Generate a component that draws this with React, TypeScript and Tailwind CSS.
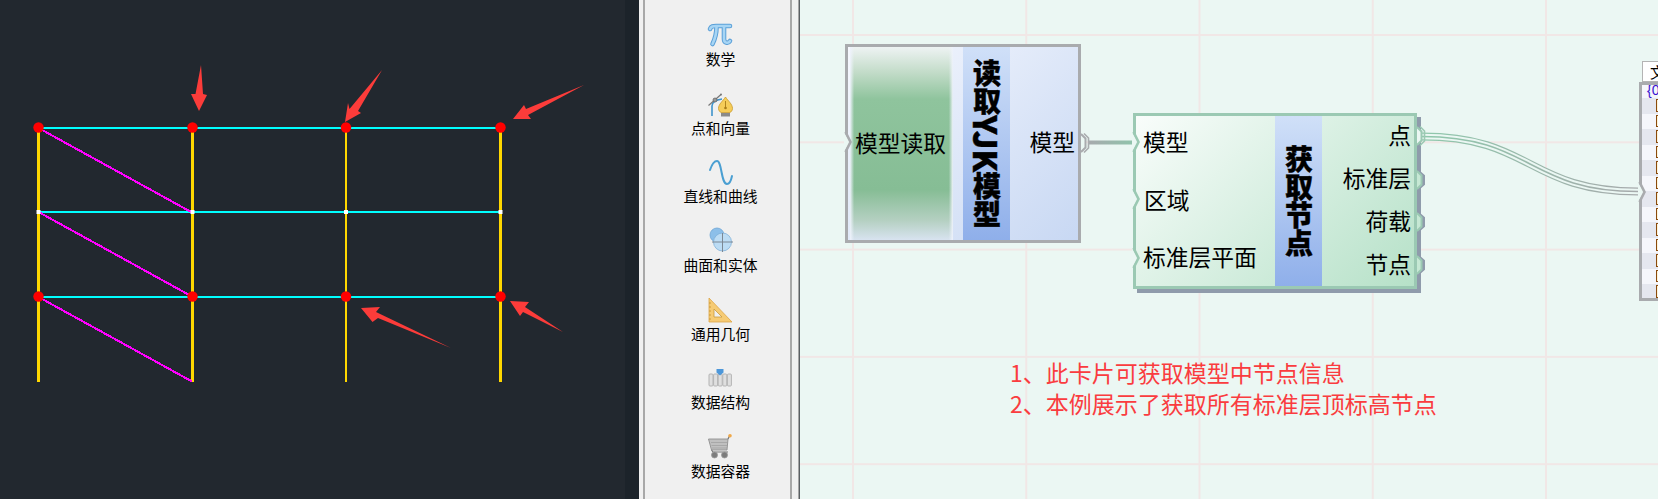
import React from "react";

const CJK = "font-['Noto_Sans_CJK_SC','Noto_Sans',sans-serif]";

function Diagram() {
  const xs = [38.5, 192.5, 346, 500.5];
  const widths = [3, 3, 2, 3];
  const ys = [128, 212, 297];
  const arrows = [
    "201,65 195.5,94 191,94 199,111 207,95 203,94",
    "345,122 348,103 349.5,109 382,70 358,111 361,113",
    "513,119 524,105 526,109 584,85 528,115 531,119",
    "361,308 380,307 376,312 451,348 378,318 372.5,322",
    "510,301 529,302 525,307 563,332 523,312 520,316",
  ];
  return (
    <svg width="639" height="499" viewBox="0 0 639 499" className="block">
      {xs.map((x, i) => (
        <line key={x} x1={x} x2={x} y1={128} y2={382} stroke="#ffd700" strokeWidth={widths[i]} />
      ))}
      {ys.map((y) => (
        <line key={y} x1={38.5} x2={500.5} y1={y} y2={y} stroke="#00ffff" strokeWidth="2" />
      ))}
      {[128, 212, 297].map((y) => (
        <line key={y} x1={38.5} y1={y} x2={192} y2={y + 84.5} stroke="#ff00ff" strokeWidth="2.1" shapeRendering="crispEdges" />
      ))}
      {xs.map((x) => (
        <rect key={x} x={x - 2} y={210} width="4" height="4" fill="#ffffff" />
      ))}
      {xs.flatMap((x) =>
        [128, 297].map((y) => <ellipse key={`${x}-${y}`} cx={x} cy={y - 0.5} rx="5.2" ry="5.2" fill="#ff0000" />)
      )}
      {arrows.map((p) => (
        <polygon key={p} points={p} fill="#fc3c3a" />
      ))}
    </svg>
  );
}

const PiIcon = () => (
  <svg width="24" height="24" viewBox="0 0 24 24" className="overflow-visible" fill="none">
    <g stroke="#5ba0d8" strokeWidth="4.6" strokeLinecap="round">
      <path d="M2 7 C3 4 5 4 8 4 L22 4" />
      <path d="M8.5 5 C8.5 12 7 17 4.5 22" />
      <path d="M16 5 L16 17 C16 21 20 22 22 19" />
    </g>
    <g stroke="#a7d5f4" strokeWidth="2.6" strokeLinecap="round">
      <path d="M2 7 C3 4 5 4 8 4 L22 4" />
      <path d="M8.5 5 C8.5 12 7 17 4.5 22" />
      <path d="M16 5 L16 17 C16 21 20 22 22 19" />
    </g>
  </svg>
);

const PointIcon = () => (
  <svg width="24" height="24" viewBox="0 0 24 24" className="overflow-visible" fill="none">
    <path d="M4 25 L4 15 C4 11 7 9 14 8" stroke="#3f94cc" strokeWidth="1.6" />
    <path d="M0.5 14.5 L13 3.5" stroke="#777" strokeWidth="1.2" />
    <circle cx="7" cy="9" r="2" fill="#9a9a9a" stroke="#666" strokeWidth="0.8" />
    <circle cx="13" cy="3.5" r="1" fill="#777" />
    <path d="M17.5 6 C20 10 24.5 13 24.5 17.5 C24.5 19.5 23 21 22 21.5 L13 21.5 C12 21 10.5 19.5 10.5 17.5 C10.5 13 15 10 17.5 6 Z" fill="#f5cc58" stroke="#c99a2c" strokeWidth="0.8" />
    <path d="M17.5 10 L17.5 17" stroke="#a87c18" strokeWidth="0.9" />
    <circle cx="17.5" cy="17" r="1.3" fill="#a87c18" />
    <rect x="13" y="22" width="9" height="3.5" fill="#8a8a8a" />
  </svg>
);

const SineIcon = () => (
  <svg width="24" height="24" viewBox="0 0 24 24" className="overflow-visible" fill="none">
    <path d="M1 11 C3 5 6 2 8 2 C13 2 12 25 18 25 C20 25 22 22 23 17" stroke="#4a9fd2" strokeWidth="2" strokeLinecap="round" />
  </svg>
);

const SurfaceIcon = () => (
  <svg width="24" height="24" viewBox="0 0 24 24" className="overflow-visible">
    <circle cx="8" cy="7" r="7" fill="#8cbfe9" stroke="#6ea6d6" strokeWidth="0.8" />
    <circle cx="13.5" cy="14" r="9" fill="#bcdcf4" stroke="#7fb0d8" strokeWidth="0.8" />
    <path d="M13.5 5 V24 M3 14 H24" stroke="#7c8894" strokeWidth="1" />
  </svg>
);

const RulerIcon = () => (
  <svg width="24" height="24" viewBox="0 0 24 24" className="overflow-visible">
    <polygon points="1,1 1,25 24,25" fill="#f6cb74" stroke="#dca546" strokeWidth="0.8" />
    <polygon points="6,12 6,20 14,20" fill="#f0f0f0" stroke="#c99a3c" strokeWidth="0.8" />
    <path d="M1 6 H3 M1 10 H3 M1 14 H3 M1 18 H3 M1 22 H3" stroke="#c28f30" strokeWidth="0.8" />
  </svg>
);

const StructureIcon = () => (
  <svg width="24" height="24" viewBox="0 0 24 24" className="overflow-visible">
    {[1, 5.6, 10.2, 14.8, 19.4].map((x) => (
      <rect key={x} x={x} y="9" width="4" height="12" rx="1" fill="#dfdfdf" stroke="#b4b4b4" strokeWidth="1" />
    ))}
    <polygon points="8.5,4 15.5,4 15.5,7.5 12,10.5 8.5,7.5" fill="#4d97d9" />
  </svg>
);

const CartIcon = () => (
  <svg width="24" height="24" viewBox="0 0 24 24" className="overflow-visible" fill="none">
    <polygon points="0.5,5 20,5 19,16 3.5,16" fill="#c0c0c0" stroke="#8f8f8f" strokeWidth="0.9" />
    <path d="M3 8.5 H19.5 M3.5 11.5 H19 M4 14 H19" stroke="#9d9d9d" strokeWidth="0.7" />
    <path d="M20 5 L21.5 2 M3.5 16 L5 18 H20" stroke="#777" strokeWidth="1.2" />
    <circle cx="22" cy="1.8" r="1.8" fill="#f0a848" />
    <circle cx="6.5" cy="21" r="3" fill="#7c7c7c" stroke="#999" strokeWidth="0.8" />
    <circle cx="16.5" cy="21" r="3" fill="#7c7c7c" stroke="#999" strokeWidth="0.8" />
  </svg>
);

const tools: [React.ComponentType, string][] = [
  [PiIcon, "数学"],
  [PointIcon, "点和向量"],
  [SineIcon, "直线和曲线"],
  [SurfaceIcon, "曲面和实体"],
  [RulerIcon, "通用几何"],
  [StructureIcon, "数据结构"],
  [CartIcon, "数据容器"],
];

function Sidebar() {
  return (
    <aside className="flex-none w-[160px] h-full bg-[#f0f0f0] pl-[4px] pr-[6px] border-r border-[#a6a6a6]">
      <div className={`h-full border-x-2 border-[#a8a8a8] pl-[6px] pt-[22px] flex flex-col items-center ${CJK}`}>
        {tools.map(([Icon, label]) => (
          <div key={label} className="flex-none h-[68.7px] flex flex-col items-center">
            <Icon />
            <div className="mt-[3px] h-[20px] leading-[20px] text-[14.8px] text-black whitespace-nowrap">{label}</div>
          </div>
        ))}
      </div>
    </aside>
  );
}

function Notch({ color, top, left }: { color: string; top: number; left: number }) {
  return (
    <svg width="9" height="20" viewBox="0 0 9 20" className="absolute" style={{ top, left }}>
      <polygon points="0,0 6,10 0,20" fill="#ebf7f3" />
      <path d="M1.5 0 L6.5 10 L1.5 20" fill="none" stroke={color} strokeWidth="2.6" />
    </svg>
  );
}

function Bump({ color, shade, top, left, double }: { color: string; shade?: string; top: number; left: number; double?: boolean }) {
  return (
    <svg width="12" height="20" viewBox="0 0 12 20" className="absolute overflow-visible" style={{ top, left }}>
      {shade && <path d="M1 1 L6.5 6 V14 L1 19" fill="none" stroke={shade} strokeWidth="3" />}
      <path d="M0 1 L4.5 5.5 V14.5 L0 19 Z" fill={shade ? "#c6e8d4" : "#ebf7f3"} />
      <path d="M0 1 L4.5 5.5 V14.5 L0 19" fill="none" stroke={color} strokeWidth="2" />
      {double && <path d="M3 0.5 L7.5 5 V15 L3 19.5" fill="none" stroke={color} strokeWidth="1.6" />}
    </svg>
  );
}

const Band = ({ children }: { children: React.ReactNode }) => (
  <div className="flex-none w-[47px] h-full flex items-center justify-center bg-[linear-gradient(to_bottom,#d0e0f8,#8fafea)]">
    <div className="[writing-mode:vertical-rl] font-black text-[28px] leading-[47px] text-black [-webkit-text-stroke:0.4px_black] whitespace-nowrap">
      {children}
    </div>
  </div>
);

function ReadNode() {
  return (
    <div className={`absolute left-[45px] top-[44px] w-[236px] h-[199px] border-[3px] border-[#a9abae] flex bg-[linear-gradient(135deg,#f6f8fe,#c8d8f3)] text-[22.75px] text-black ${CJK}`}>
      <div className="flex-none w-[115px] h-full pl-[2px] pr-[10px]">
        <div className="h-full flex items-center justify-center pr-[2px] whitespace-nowrap bg-[linear-gradient(to_right,#eef2fb,transparent_4%,transparent_96%,#eef2fb),linear-gradient(to_bottom,#eef3f3,#c3dcc9_13%,#8fc49d_27%,#86bd95_74%,#b5d0c2_90%,#d8e3f0)]">
          模型读取
        </div>
      </div>
      <Band>
        读取<span className="text-[32px]">YJK</span>模型
      </Band>
      <div className="flex-1 h-full flex items-center justify-end pr-[3px] pb-[2px]">模型</div>
    </div>
  );
}

function NodesNode() {
  return (
    <div className={`absolute left-[333px] top-[113px] w-[284px] h-[176px] border-[3px] border-[#9bc9b3] shadow-[4px_4px_0_#8f9bab] flex bg-[linear-gradient(135deg,#f9fdfb,#b6e1c8)] text-[22.75px] leading-[30px] text-black ${CJK}`}>
      <div className="flex-none w-[139px] h-full flex flex-col gap-[27.5px] pt-[11px] pl-[7px] whitespace-nowrap">
        <div>模型</div>
        <div className="pl-[1px]">区域</div>
        <div>标准层平面</div>
      </div>
      <Band>获取节点</Band>
      <div className="flex-1 h-full flex flex-col items-end gap-[13px] pt-[4px] pr-[3px] whitespace-nowrap">
        <div>点</div>
        <div>标准层</div>
        <div>荷载</div>
        <div>节点</div>
      </div>
    </div>
  );
}

function PanelNode() {
  const rows = Array.from({ length: 13 }, (_, i) => i);
  return (
    <div className={`absolute left-[839px] top-[61px] w-[40px] flex flex-col ${CJK}`}>
      <div className="ml-[3px] h-[21px] bg-white border border-[#b4b4b4] pl-[7px] text-[15px] leading-[20px] text-black overflow-hidden whitespace-nowrap">
        文
      </div>
      <div className="h-[219px] border-[3px] border-[#a9abae] bg-[#f5f6fb] overflow-hidden">
        <div className="h-[13px] pl-[5px] text-[14px] leading-[11px] text-[#3a12d0] whitespace-nowrap font-['Liberation_Sans',sans-serif]">
          {"{0"}
        </div>
        {rows.map((i) => (
          <div key={i} className={`h-[15.5px] pl-[14px] pt-[1px] ${i % 2 === 0 ? "bg-[#e5e7ef]" : "bg-[#f5f6fb]"}`}>
            <div className="w-[14px] h-[12.5px] border border-[#8a4a0c] bg-[#fdf3d8]" />
          </div>
        ))}
      </div>
    </div>
  );
}

function Wires() {
  return (
    <svg width="858" height="499" viewBox="0 0 858 499" className="absolute left-0 top-0">
      <defs>
        <linearGradient id="w1" gradientUnits="userSpaceOnUse" x1="288" y1="0" x2="335" y2="0">
          <stop offset="0" stopColor="#a7aaad" />
          <stop offset="1" stopColor="#8fc4ab" />
        </linearGradient>
        <linearGradient id="w2" gradientUnits="userSpaceOnUse" x1="622" y1="0" x2="838" y2="0">
          <stop offset="0" stopColor="#8fc8ac" />
          <stop offset="1" stopColor="#a6a9ab" />
        </linearGradient>
      </defs>
      <line x1="288" y1="142.5" x2="335" y2="142.5" stroke="url(#w1)" strokeWidth="4" />
      <g fill="none">
        <path d="M622 136.5 C732 136.5 728 191.5 838 191.5" stroke="url(#w2)" strokeWidth="8" />
        <path d="M622 136.5 C732 136.5 728 191.5 838 191.5" stroke="#ebf7f3" strokeWidth="5.6" />
        <path d="M622 136.5 C732 136.5 728 191.5 838 191.5" stroke="url(#w2)" strokeWidth="1.6" />
      </g>
    </svg>
  );
}

export default function App() {
  const green = "#9bc9b3";
  const gray = "#a9abae";
  return (
    <div className="flex w-[1658px] h-[499px] overflow-hidden">
      <section className="flex-none w-[639px] h-full flex bg-[#22282f]">
        <div className="flex-none w-[625px] overflow-hidden">
          <Diagram />
        </div>
        <div className="flex-1 bg-[#1c232a]" />
      </section>
      <Sidebar />
      <main className="relative flex-1 h-full overflow-hidden border-l border-[#5a5f63] bg-[#ebf7f3] bg-[linear-gradient(to_right,#f1e7e6_2px,transparent_2px),linear-gradient(to_bottom,#f1e7e6_2px,transparent_2px)] bg-[size:173.25px_107.3px] bg-[position:52px_34px]">
        <Wires />
        <ReadNode />
        <NodesNode />
        <PanelNode />
        <Notch color={gray} top={132} left={44} />
        <Bump color={gray} top={133} left={281} double />
        <Notch color={green} top={132} left={332} />
        <Notch color={green} top={189} left={332} />
        <Notch color={green} top={248} left={332} />
        <Bump color={green} top={126} left={617} double />
        <Bump color={green} shade="#8f9bab" top={170} left={617} />
        <Bump color={green} shade="#8f9bab" top={212} left={617} />
        <Bump color={green} shade="#8f9bab" top={255} left={617} />
        <Notch color={gray} top={182} left={838} />
        <div className={`absolute left-[210px] top-[357px] text-[23px] leading-[30.7px] text-[#fa3c3f] whitespace-nowrap ${CJK}`}>
          <div>1、此卡片可获取模型中节点信息</div>
          <div>2、本例展示了获取所有标准层顶标高节点</div>
        </div>
      </main>
    </div>
  );
}
